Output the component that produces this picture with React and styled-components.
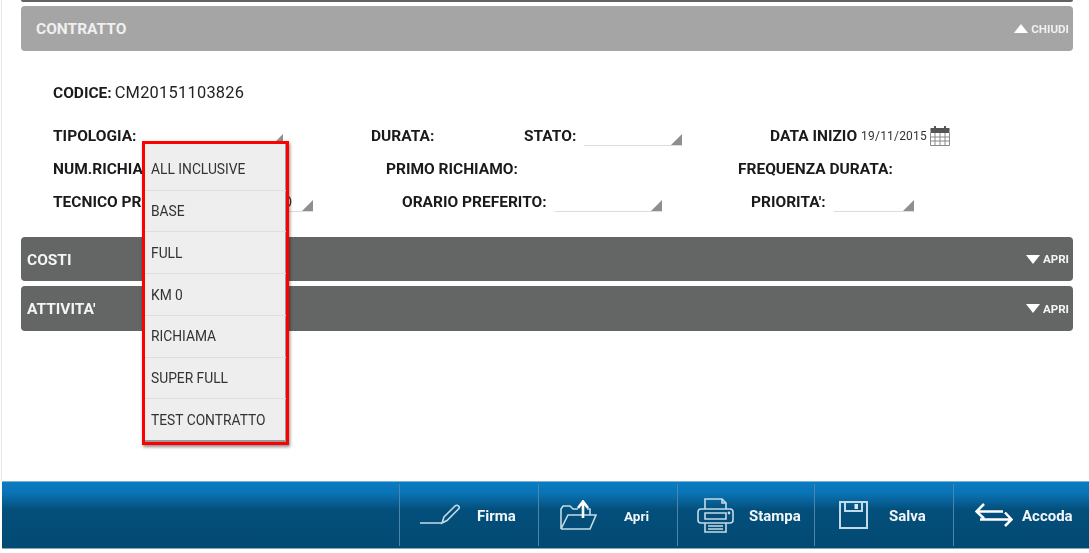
import React from 'react';
import styled, { createGlobalStyle } from 'styled-components';

const Global = createGlobalStyle`
  html, body { margin:0; padding:0; background:#fff; overflow:hidden; }
  body { font-family:Roboto, "Liberation Sans", sans-serif; }
`;

const Page = styled.div`
  position:relative; width:1089px; height:553px; box-sizing:border-box; display:flex; flex-direction:column; filter:blur(.45px);
`;
const Main = styled.main`
  flex:1; min-height:0; margin-left:1px; border-left:1px solid #e6e6e6; padding:0 16px 0 19px; display:flex; flex-direction:column;
`;
const TopEdge = styled.div`
  height:2px; background:#5f6361; border-radius:0 0 2px 2px; flex:none;
`;
const Bar = styled.div`
  flex:none; height:${p=>p.h}px; margin-top:${p=>p.mt}px; padding:0 4px 0 ${p=>p.pl}px; border-radius:4px; display:flex; align-items:center; justify-content:space-between;
  background:${p=>p.light?'#a5a5a5':'#636664'}; color:${p=>p.light?'#f0f0f0':'#f4f4f4'};
`;
const BarTitle = styled.span`
  font-size:15.5px; font-weight:700; margin-top:1px;
`;
const Toggle = styled.span`
  display:flex; align-items:center; gap:3px; font-size:11.6px; font-weight:700;
  svg { display:block; }
`;
const Form = styled.div`
  padding:32px 0 0 32px; height:186px; box-sizing:border-box; flex:none; color:#1a1a1a;
`;
const CodeRow = styled.div`
  display:flex; align-items:baseline; gap:3px; height:20px; margin-bottom:16px;
`;
const CodeValue = styled.span`
  font-size:16.4px; letter-spacing:.25px; color:#222;
`;
const Row = styled.div`
  display:flex; align-items:center; height:33px;
`;
const Cell = styled.div`
  display:flex; align-items:center; flex:none; width:${p=>p.w ? p.w+'px' : 'auto'};
`;
const Label = styled.span`
  font-size:15.5px; font-weight:700; white-space:nowrap; color:#1a1a1a;
`;
const Select = styled.div`
  position:relative; box-sizing:border-box; width:${p=>p.w}px; height:18px; margin-left:${p=>p.ml}px; margin-top:2px; border-bottom:1px solid #dcdcdc;
  font-size:14px; color:#333; text-align:right; padding-right:21px; line-height:17px;
  &::after { content:''; position:absolute; right:0; bottom:0; border-style:solid; border-width:0 0 11px 11px; border-color:transparent transparent #8f8f8f transparent; }
`;
const DateValue = styled.span`
  font-size:12px; margin-left:4px; letter-spacing:.2px; color:#333;
`;
const CalendarBox = styled.span`
  margin-left:3px; display:flex;
`;
const Menu = styled.ul`
  position:absolute; left:142px; top:141px; width:147px; height:304px; box-sizing:border-box; margin:0; padding:5px 0 2px; list-style:none;
  border:3px solid #f00; background:#eee; box-shadow:1px 2px 3px rgba(0,0,0,.45), inset -1px -2px 0 #9a9a9a;
  display:flex; flex-direction:column;
`;
const MenuItem = styled.li`
  flex:1; display:flex; align-items:center; padding-left:6px; font-size:13.8px; color:#333; white-space:nowrap;
  border-top:${p=>p.first?'none':'1px solid #dedede'};
`;
const Footer = styled.footer`
  flex:none; height:68px; margin:0 0 4px 2px; box-sizing:border-box; display:flex; justify-content:flex-end;
  border-top:1px solid #7db2d2; border-bottom:1px solid #86a9bf; padding:2px 0;
  background:linear-gradient(#0a7cc4 0, #0a72b2 18%, #034f7b 42%, #034a73 100%);
`;
const Action = styled.div`
  box-sizing:border-box; width:${p=>p.w}px; display:flex; align-items:center; border-left:1px solid #4b86a8; padding-left:${p=>p.pl}px; color:#f2f6f9;
  font-weight:700; svg { display:block; flex:none; }
`;
const ActionText = styled.span`
  margin:2px 0 0 ${p=>p.ml}px; font-size:${p=>p.size || 15}px;
`;

const Tri = ({ up }) => (
  <svg width="14" height="11" viewBox="0 0 14 11">
    <path d={up ? 'M7 1 L14 10 H0 Z' : 'M7 10 L14 1 H0 Z'} fill="#fff" />
  </svg>
);

const Calendar = () => (
  <svg width="20" height="20" viewBox="0 0 20 20">
    <rect x="0.5" y="2" width="19" height="5" fill="#555" />
    <rect x="4" y="0" width="2" height="4" fill="#555" />
    <rect x="14" y="0" width="2" height="4" fill="#555" />
    <path d="M.5 7 V19.5 H19.5 V7 M.5 11 H19.5 M.5 15 H19.5 M5 7 V19.5 M10 7 V19.5 M15 7 V19.5" fill="none" stroke="#8a8a8a" strokeWidth="1" />
  </svg>
);

const stroke = { fill:'none', stroke:'#c3dae8', strokeWidth:1.6 };

const SignIcon = () => (
  <svg width="40" height="22" viewBox="0 0 40 22">
    <path {...stroke} d="M0 19 H22 Q24 19 25 17 M22 19 L24 13 L35 2 Q37 0.5 38.5 2 Q40 3.5 38.5 5 L27 16.5 Z" />
  </svg>
);
const OpenIcon = () => (
  <svg width="37" height="31" viewBox="0 0 37 31">
    <path {...stroke} d="M1 29 V9 L3 6 H10 L13 9 H18 M27 9 H30 V15 M1 29 H30 L36 15 H8 L1 29" />
    <path d="M23 18 V3 M18 8 L23 1.5 L28 8" fill="none" stroke="#fff" strokeWidth="2.6" />
  </svg>
);
const PrintIcon = () => (
  <svg width="37" height="35" viewBox="0 0 37 35">
    <path {...stroke} d="M8 11 V1 H25 L29 5 V11 M25 1 V5 H29 M8 25 H4 Q1 25 1 22 V14 Q1 11 4 11 H33 Q36 11 36 14 V22 Q36 25 33 25 H29 M8 15 H29 V21 H8 Z M8 25 H29 V34 H8 Z M11 28 H26 M11 31 H26" />
    <circle cx="32" cy="15" r="1.4" fill="#c3dae8" />
  </svg>
);
const SaveIcon = () => (
  <svg width="29" height="28" viewBox="0 0 29 28">
    <path {...stroke} strokeWidth="2" d="M1 1 H28 V27 H1 Z M6 1 V10 H23 V1" />
    <rect x="15.5" y="3" width="3.5" height="5" fill="#dbe8f0" />
  </svg>
);
const QueueIcon = () => (
  <svg width="38" height="24" viewBox="0 0 38 24">
    <path d="M28 8.5 H2 M9 1 L1.5 8.5 L9 15.5 M5 16.5 H36 M30 9.5 L36.5 16.5 L30 23" fill="none" stroke="#fff" strokeWidth="2.5" />
  </svg>
);

const options = ['ALL INCLUSIVE','BASE','FULL','KM 0','RICHIAMA','SUPER FULL','TEST CONTRATTO'];

export default function App(){
  return (
    <Page>
      <Global />
      <Main>
        <TopEdge />
        <Bar light h={45} mt={4} pl={15}>
          <BarTitle>CONTRATTO</BarTitle>
          <Toggle><Tri up />CHIUDI</Toggle>
        </Bar>
        <Form>
          <CodeRow>
            <Label>CODICE:</Label>
            <CodeValue>CM20151103826</CodeValue>
          </CodeRow>
          <Row>
            <Cell w={318}><Label>TIPOLOGIA:</Label><Select w={140} ml={7} /></Cell>
            <Cell w={153}><Label>DURATA:</Label></Cell>
            <Cell w={246}><Label>STATO:</Label><Select w={98} ml={8} /></Cell>
            <Cell>
              <Label>DATA INIZIO</Label>
              <DateValue>19/11/2015</DateValue>
              <CalendarBox><Calendar /></CalendarBox>
            </Cell>
          </Row>
          <Row>
            <Cell w={333}><Label>NUM.RICHIAMI:</Label></Cell>
            <Cell w={352}><Label>PRIMO RICHIAMO:</Label></Cell>
            <Cell><Label>FREQUENZA DURATA:</Label></Cell>
          </Row>
          <Row>
            <Cell w={349}><Label>TECNICO PREFERITO:</Label><Select w={105} ml={2}>O</Select></Cell>
            <Cell w={349}><Label>ORARIO PREFERITO:</Label><Select w={107} ml={8} /></Cell>
            <Cell><Label>PRIORITA':</Label><Select w={80} ml={8} /></Cell>
          </Row>
        </Form>
        <Bar h={44} mt={0} pl={6}>
          <BarTitle>COSTI</BarTitle>
          <Toggle><Tri />APRI</Toggle>
        </Bar>
        <Bar h={45} mt={5} pl={6}>
          <BarTitle>ATTIVITA'</BarTitle>
          <Toggle><Tri />APRI</Toggle>
        </Bar>
      </Main>
      <Footer>
        <Action w={139} pl={20}><SignIcon /><ActionText ml={17}>Firma</ActionText></Action>
        <Action w={139} pl={21}><OpenIcon /><ActionText ml={27} size={13.5}>Apri</ActionText></Action>
        <Action w={137} pl={19}><PrintIcon /><ActionText ml={15}>Stampa</ActionText></Action>
        <Action w={139} pl={24}><SaveIcon /><ActionText ml={21}>Salva</ActionText></Action>
        <Action w={136} pl={21}><QueueIcon /><ActionText ml={9}>Accoda</ActionText></Action>
      </Footer>
      <Menu>
        {options.map((o,i)=> <MenuItem key={o} first={i===0}>{o}</MenuItem>)}
      </Menu>
    </Page>
  );
}
